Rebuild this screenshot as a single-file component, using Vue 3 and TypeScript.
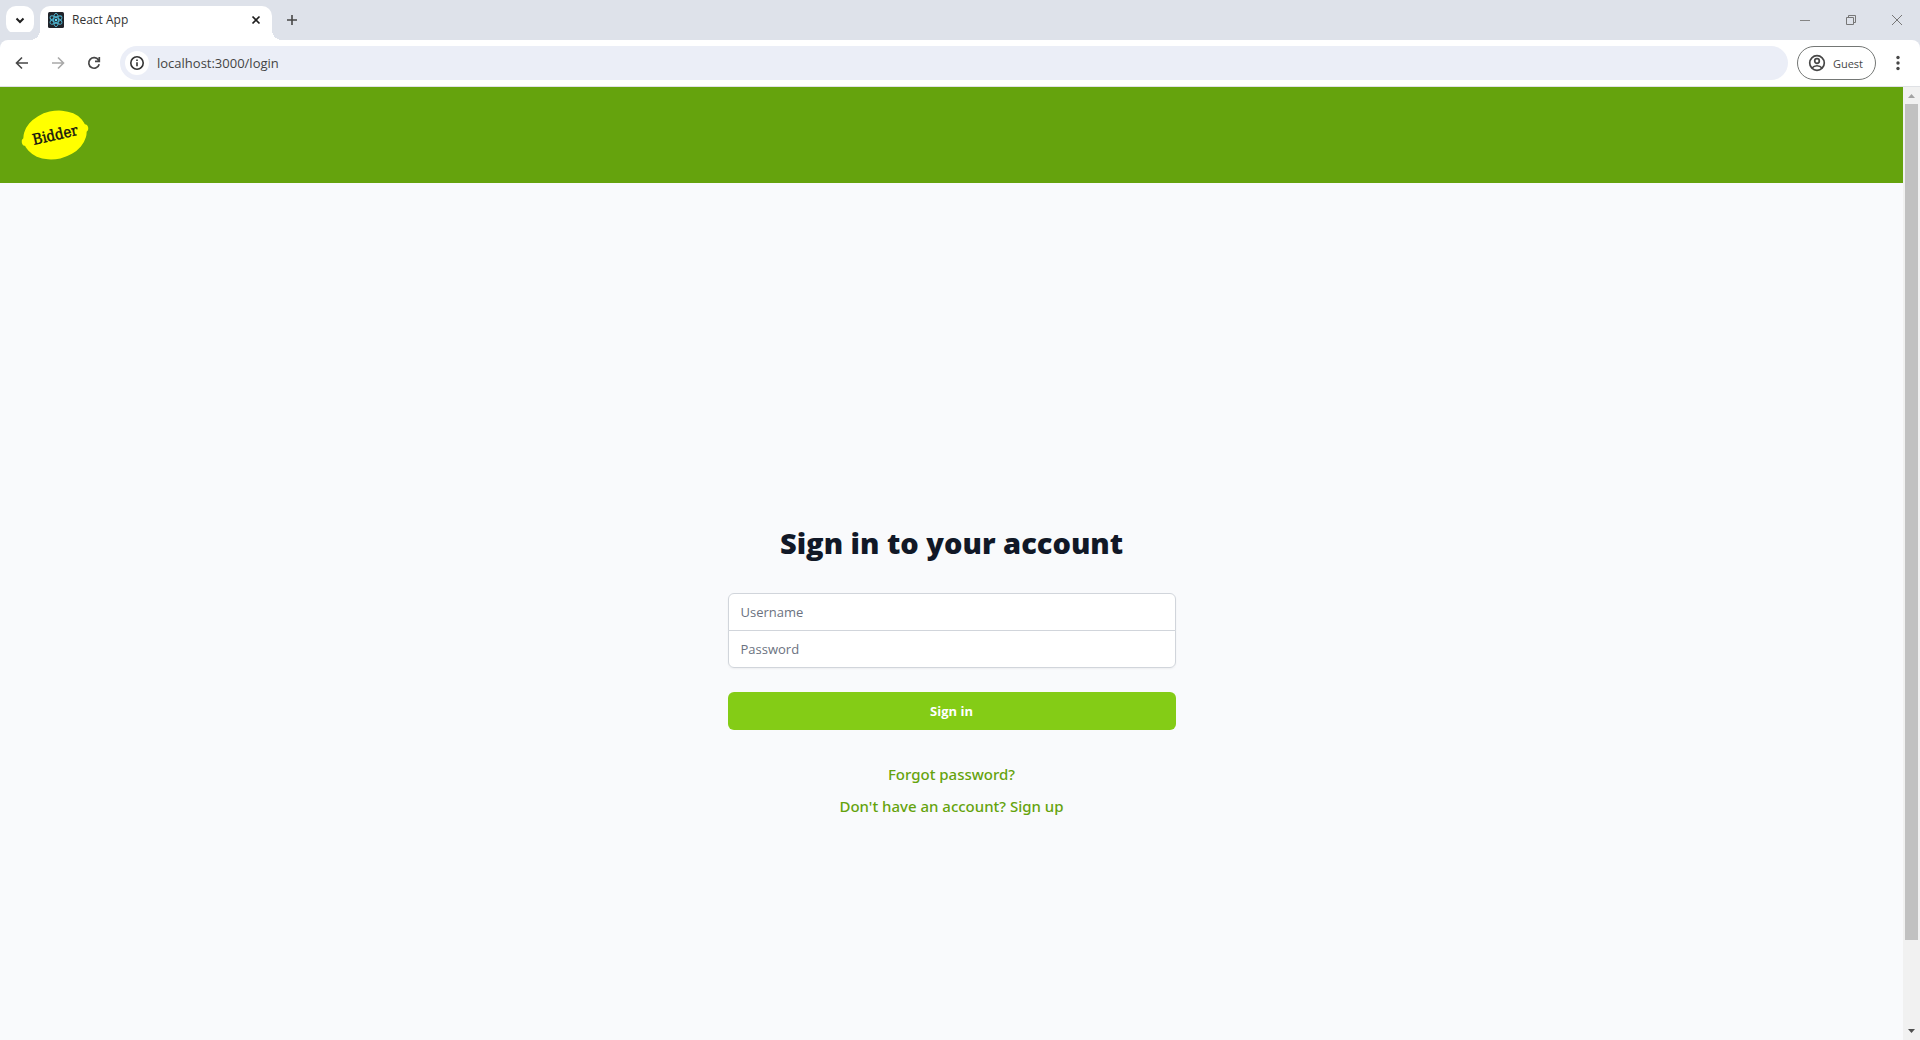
<script setup lang="ts">
import { ref } from 'vue'

const address = ref('localhost:3000/login')
const username = ref('')
const password = ref('')
const petals = [0, 60, 120]
</script>

<template>
  <div class="browser">
    <div class="tab-strip">
      <button class="tab-search" type="button" aria-label="Search tabs">
        <svg width="28" height="28" viewBox="0 0 28 28"><path d="M10.500 12.500l3.500 3.500 3.500-3.500" fill="none" stroke="#1f1f1f" stroke-width="2" /></svg>
      </button>
      <div class="tab">
        <svg width="16" height="16" viewBox="0 0 16 16">
          <rect width="16" height="16" rx="1.500" fill="#20232a" />
          <g fill="none" stroke="#4fb5d0" stroke-width="0.900">
            <ellipse v-for="angle in petals" :key="angle" cx="8" cy="8" rx="6.700" ry="2.600" :transform="`rotate(${angle + 30} 8 8)`" />
          </g>
          <circle cx="8" cy="8" r="1.300" fill="#61dafb" />
        </svg>
        <span class="tab-title">React App</span>
        <button class="icon-button" type="button" aria-label="Close tab">
          <svg width="16" height="16" viewBox="0 0 16 16"><path d="M4.500 4.500l7 7M11.500 4.500l-7 7" stroke="#1f1f1f" stroke-width="1.700" /></svg>
        </button>
      </div>
      <button class="icon-button new-tab" type="button" aria-label="New tab">
        <svg width="16" height="16" viewBox="0 0 16 16"><path d="M8 3v10M3 8h10" stroke="#474747" stroke-width="1.600" /></svg>
      </button>
      <div class="window-controls">
        <button class="icon-button" type="button" aria-label="Minimize">
          <svg width="12" height="12" viewBox="0 0 12 12"><path d="M1 6.500h10" stroke="#858585" /></svg>
        </button>
        <button class="icon-button" type="button" aria-label="Restore">
          <svg width="12" height="12" viewBox="0 0 12 12"><path d="M1.500 3.500h7v7h-7zM3.500 3.500v-2h7v7h-2" fill="none" stroke="#777" /></svg>
        </button>
        <button class="icon-button" type="button" aria-label="Close">
          <svg width="12" height="12" viewBox="0 0 12 12"><path d="M1 1l10 10M11 1L1 11" stroke="#777" /></svg>
        </button>
      </div>
    </div>

    <div class="toolbar">
      <div class="nav-buttons">
        <button class="icon-button" type="button" aria-label="Back">
          <svg width="16" height="16" viewBox="0 0 16 16"><path d="M14 8H3M8 2.500L2.500 8 8 13.500" fill="none" stroke="#474747" stroke-width="1.600" /></svg>
        </button>
        <button class="icon-button" type="button" aria-label="Forward">
          <svg width="16" height="16" viewBox="0 0 16 16"><path d="M2 8h11M8 2.500L13.500 8 8 13.500" fill="none" stroke="#a9a9a9" stroke-width="1.600" /></svg>
        </button>
        <button class="icon-button" type="button" aria-label="Reload">
          <svg width="16" height="16" viewBox="0 0 16 16"><path d="M13.200 9.300A5.300 5.300 0 1 1 12.500 5L13.300 6.200M13.300 2v4.300H9" fill="none" stroke="#474747" stroke-width="1.700" /></svg>
        </button>
      </div>
      <div class="omnibox">
        <button class="site-info" type="button" aria-label="View site information">
          <svg width="16" height="16" viewBox="0 0 16 16"><circle cx="8" cy="8" r="6.200" fill="none" stroke="#333" stroke-width="1.600" /><path d="M8 7.200v4M8 4.500v1.600" stroke="#333" stroke-width="1.600" /></svg>
        </button>
        <input v-model="address" type="text" aria-label="Address" />
      </div>
      <button class="profile" type="button">
        <svg width="18" height="18" viewBox="0 0 18 18" fill="none" stroke="#474747" stroke-width="1.700"><circle cx="9" cy="9" r="7.300" /><circle cx="9" cy="7" r="2.300" /><path d="M4 14c2.500-3 7.500-3 10 0" /></svg>
        <span>Guest</span>
      </button>
      <button class="icon-button menu" type="button" aria-label="Menu">
        <svg width="16" height="16" viewBox="0 0 16 16" fill="#474747"><circle cx="8" cy="2.500" r="1.700" /><circle cx="8" cy="8" r="1.700" /><circle cx="8" cy="13.500" r="1.700" /></svg>
      </button>
    </div>

    <div class="viewport">
      <div class="page">
        <header class="site-header">
          <a href="/" aria-label="Bidder home">
            <svg width="70" height="54" viewBox="0 0 70 54">
              <g transform="rotate(-13 35 27)">
                <ellipse cx="35" cy="27" rx="32" ry="24" fill="#ff0" />
                <circle cx="5" cy="27" r="4" fill="#ff0" />
                <circle cx="65" cy="27" r="4" fill="#ff0" />
                <text x="35" y="32" text-anchor="middle" class="logo-text">Bidder</text>
              </g>
            </svg>
          </a>
        </header>
        <main>
          <div class="sign-in">
            <h2>Sign in to your account</h2>
            <form @submit.prevent>
              <div class="fields">
                <input v-model="username" type="text" placeholder="Username" aria-label="Username" autocomplete="username" />
                <input v-model="password" type="password" placeholder="Password" aria-label="Password" autocomplete="current-password" />
              </div>
              <button class="submit" type="submit">Sign in</button>
            </form>
            <nav class="links">
              <a href="/forgot-password">Forgot password?</a>
              <a href="/signup">Don't have an account? Sign up</a>
            </nav>
          </div>
        </main>
      </div>
      <div class="scrollbar" aria-hidden="true">
        <svg width="17" height="17" viewBox="0 0 17 17"><path d="M5 11h7L8.500 7z" fill="#a3a3a3" /></svg>
        <div class="track"><div class="thumb"></div></div>
        <svg width="17" height="17" viewBox="0 0 17 17"><path d="M5 6h7L8.500 10z" fill="#505050" /></svg>
      </div>
    </div>
  </div>
</template>

<style>
body {
  margin: 0;
}
</style>

<style scoped>
* {
  box-sizing: border-box;
}
.browser {
  display: flex;
  flex-direction: column;
  height: 100vh;
  overflow: hidden;
  font-family: "Open Sans", "Noto Sans", sans-serif;
  background: #fff;
}
svg {
  display: block;
  flex: none;
}
button {
  border: 0;
  padding: 0;
  font-family: inherit;
  background: none;
}
.icon-button {
  display: flex;
  align-items: center;
  justify-content: center;
}
.tab-strip {
  display: flex;
  align-items: center;
  height: 40px;
  flex: none;
  padding-left: 6px;
  background: #dee2ea;
}
.tab-search {
  width: 28px;
  height: 28px;
  border-radius: 10px;
  background: #fff;
}
.tab {
  position: relative;
  display: flex;
  align-items: center;
  align-self: flex-end;
  width: 232px;
  height: 34px;
  margin-left: 6px;
  padding: 0 8px 6px;
  border-radius: 10px 10px 0 0;
  background: #fff;
}
.tab::before,
.tab::after {
  content: "";
  position: absolute;
  bottom: 0;
  width: 10px;
  height: 10px;
}
.tab::before {
  right: 100%;
  background: radial-gradient(circle at 0 0, transparent 10px, #fff 10px);
}
.tab::after {
  left: 100%;
  background: radial-gradient(circle at 100% 0, transparent 10px, #fff 10px);
}
.tab-title {
  flex: 1;
  margin-left: 8px;
  font-size: 12px;
  line-height: 18px;
  color: #333;
}
.new-tab {
  margin-left: 12px;
}
.window-controls {
  display: flex;
  gap: 34px;
  margin-left: auto;
  padding-right: 17px;
}
.toolbar {
  display: flex;
  align-items: center;
  height: 47px;
  flex: none;
  border-bottom: 1px solid #dfe1e5;
  border-radius: 8px 8px 0 0;
  background: #fff;
  box-shadow: 0 -8px 0 #dee2ea;
}
.nav-buttons {
  display: flex;
  gap: 20px;
  width: 120px;
  padding-left: 14px;
}
.omnibox {
  display: flex;
  align-items: center;
  flex: 1;
  height: 34px;
  padding-left: 5px;
  border-radius: 17px;
  background: #ebeef7;
}
.site-info {
  display: flex;
  align-items: center;
  justify-content: center;
  width: 24px;
  height: 24px;
  border-radius: 12px;
  background: #fff;
}
.omnibox input {
  flex: 1;
  margin: 0 16px 0 8px;
  border: 0;
  padding: 0;
  outline: 0;
  font-family: inherit;
  font-size: 13px;
  line-height: 20px;
  color: #444;
  background: none;
}
.profile {
  display: flex;
  align-items: center;
  gap: 7px;
  height: 34px;
  margin-left: 9px;
  padding: 0 12px 0 10px;
  border: 1px solid #747775;
  border-radius: 17px;
  font-size: 11px;
  color: #474747;
}
.menu {
  width: 44px;
}
.viewport {
  display: flex;
  flex: 1;
  min-height: 0;
}
.page {
  flex: 1;
  overflow: hidden;
  background: #f9fafc;
}
.site-header {
  display: flex;
  align-items: center;
  height: 96px;
  padding-left: 20px;
  background: #65a30d;
}
.logo-text {
  font-family: "DejaVu Serif Condensed", "DejaVu Serif", serif;
  font-size: 15px;
  fill: #111;
  stroke: #111;
  stroke-width: 0.4px;
}
main {
  display: flex;
  align-items: center;
  justify-content: center;
  min-height: calc(100vh - 88px);
}
.sign-in {
  width: 448px;
}
h2 {
  margin: 24px 0 32px;
  font-size: 29px;
  line-height: 36px;
  font-weight: 800;
  text-align: center;
  white-space: nowrap;
  color: #111827;
}
.fields {
  display: flex;
  flex-direction: column;
  margin-bottom: 24px;
  border-radius: 6px;
  box-shadow: 0 1px 2px rgba(0, 0, 0, 0.05);
}
.fields input {
  height: 38px;
  border: 1px solid #d1d5db;
  padding: 8px 12px;
  outline: 0;
  font-family: inherit;
  font-size: 13px;
  line-height: 20px;
  color: #111827;
  background: #fff;
}
.fields input:first-child {
  border-radius: 6px 6px 0 0;
}
.fields input:last-child {
  margin-top: -1px;
  border-radius: 0 0 6px 6px;
}
.fields input::placeholder {
  color: #6b7280;
}
.submit {
  width: 100%;
  height: 38px;
  border-radius: 6px;
  font-size: 13px;
  line-height: 20px;
  font-weight: 700;
  color: #fff;
  background: #84cc16;
}
.links {
  display: flex;
  flex-direction: column;
  align-items: center;
  gap: 8px;
  margin-top: 32px;
}
.links a {
  font-family: "Noto Sans", "Open Sans", sans-serif;
  font-size: 15px;
  line-height: 24px;
  font-weight: 500;
  text-decoration: none;
  color: #65a30d;
}
.scrollbar {
  display: flex;
  flex-direction: column;
  width: 17px;
  background: #f1f1f1;
}
.track {
  flex: 1;
  padding: 0 2px;
}
.thumb {
  height: 91%;
  background: #c1c1c1;
}
</style>
